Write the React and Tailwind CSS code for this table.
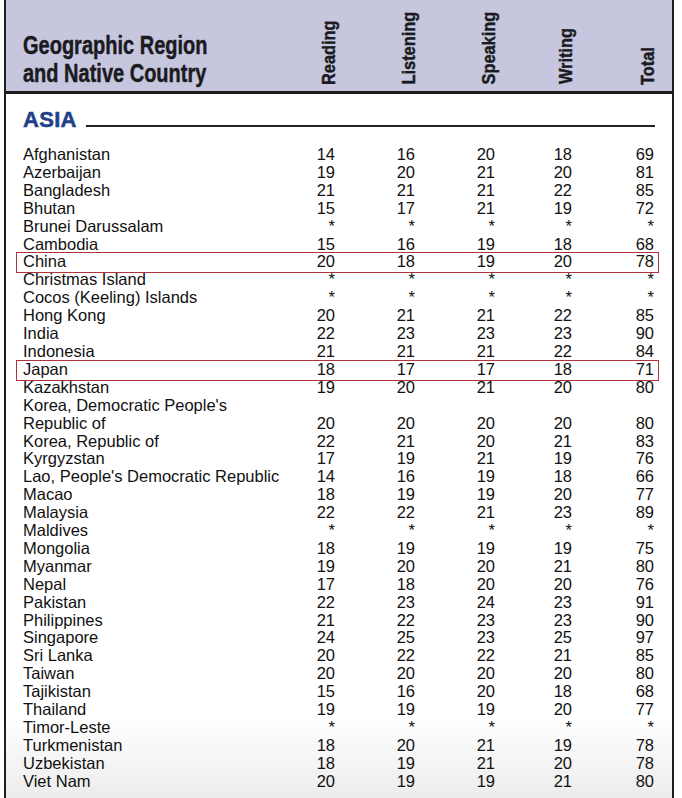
import React from "react";

const rows = [
  ["Afghanistan", "14", "16", "20", "18", "69"],
  ["Azerbaijan", "19", "20", "21", "20", "81"],
  ["Bangladesh", "21", "21", "21", "22", "85"],
  ["Bhutan", "15", "17", "21", "19", "72"],
  ["Brunei Darussalam", "*", "*", "*", "*", "*"],
  ["Cambodia", "15", "16", "19", "18", "68"],
  ["China", "20", "18", "19", "20", "78", true],
  ["Christmas Island", "*", "*", "*", "*", "*"],
  ["Cocos (Keeling) Islands", "*", "*", "*", "*", "*"],
  ["Hong Kong", "20", "21", "21", "22", "85"],
  ["India", "22", "23", "23", "23", "90"],
  ["Indonesia", "21", "21", "21", "22", "84"],
  ["Japan", "18", "17", "17", "18", "71", true],
  ["Kazakhstan", "19", "20", "21", "20", "80"],
  ["Korea, Democratic People's", "", "", "", "", ""],
  ["Republic of", "20", "20", "20", "20", "80"],
  ["Korea, Republic of", "22", "21", "20", "21", "83"],
  ["Kyrgyzstan", "17", "19", "21", "19", "76"],
  ["Lao, People's Democratic Republic", "14", "16", "19", "18", "66"],
  ["Macao", "18", "19", "19", "20", "77"],
  ["Malaysia", "22", "22", "21", "23", "89"],
  ["Maldives", "*", "*", "*", "*", "*"],
  ["Mongolia", "18", "19", "19", "19", "75"],
  ["Myanmar", "19", "20", "20", "21", "80"],
  ["Nepal", "17", "18", "20", "20", "76"],
  ["Pakistan", "22", "23", "24", "23", "91"],
  ["Philippines", "21", "22", "23", "23", "90"],
  ["Singapore", "24", "25", "23", "25", "97"],
  ["Sri Lanka", "20", "22", "22", "21", "85"],
  ["Taiwan", "20", "20", "20", "20", "80"],
  ["Tajikistan", "15", "16", "20", "18", "68"],
  ["Thailand", "19", "19", "19", "20", "77"],
  ["Timor-Leste", "*", "*", "*", "*", "*"],
  ["Turkmenistan", "18", "20", "21", "19", "78"],
  ["Uzbekistan", "18", "19", "21", "20", "78"],
  ["Viet Nam", "20", "19", "19", "21", "80"],
];

const labels = ["Reading", "Listening", "Speaking", "Writing", "Total"];

export default function App() {
  return (
    <div className="w-[682px] h-[798px] overflow-hidden bg-white pl-[4px] pr-[8px]">
      <div className="h-full border-l-2 border-r-2 border-[#1f1f1f] bg-[linear-gradient(to_bottom,#ffffff_0%,#ffffff_90%,#ececec_100%)]">
        {/* Header */}
        <div className="h-[94px] bg-[#c6c7de] border-b-[3px] border-[#1c1c1c] grid grid-cols-[252px_62px_80px_80px_77px_82px] pl-[17px] text-[#1a1a20] font-['Liberation_Sans',Arial,sans-serif] font-bold [-webkit-text-stroke:0.45px_#1a1a20]">
          <div className="flex flex-col justify-end pb-[6px] text-[25px] leading-[28px] whitespace-nowrap">
            <div className="origin-left scale-x-[0.8]">Geographic Region</div>
            <div className="origin-left scale-x-[0.8]">and Native Country</div>
          </div>
          {labels.map((l) => (
            <div key={l} className="flex items-end justify-end pb-[9px]">
              <div className="origin-bottom scale-y-[0.86]">
                <div className="[writing-mode:vertical-rl] rotate-180 text-[19px] leading-[16px] whitespace-nowrap">
                  {l}
                </div>
              </div>
            </div>
          ))}
        </div>

        {/* Section title */}
        <div className="flex items-end pl-[17px] pr-[17px] pb-[15px] h-[52px] font-['Liberation_Sans',Arial,sans-serif]">
          <div className="text-[22px] leading-[22px] font-bold text-[#1f3f88] tracking-[0.3px] [-webkit-text-stroke:0.5px_#1f3f88]">ASIA</div>
          <div className="flex-1 ml-[9px] mb-[4px] h-[2px] bg-[#222]" />
        </div>

        {/* Rows */}
        <div className="font-['Liberation_Sans',Arial,sans-serif] text-[16.5px] text-[#111] pr-[18px] pl-[17px]">
          {rows.map((r, i) => (
            <div
              key={i}
              className="relative grid grid-cols-[252px_60px_80px_80px_77px_82px] h-[17.91px] leading-[17.91px]"
            >
              <div className="whitespace-nowrap">{r[0]}</div>
              {r.slice(1, 6).map((v, j) => (
                <div key={j} className="text-right">
                  {v}
                </div>
              ))}
              {r[6] && (
                <div className="absolute left-[-7px] right-[-5px] top-[-1px] bottom-[-2px] border border-[#b0323c]" />
              )}
            </div>
          ))}
        </div>
      </div>
    </div>
  );
}
